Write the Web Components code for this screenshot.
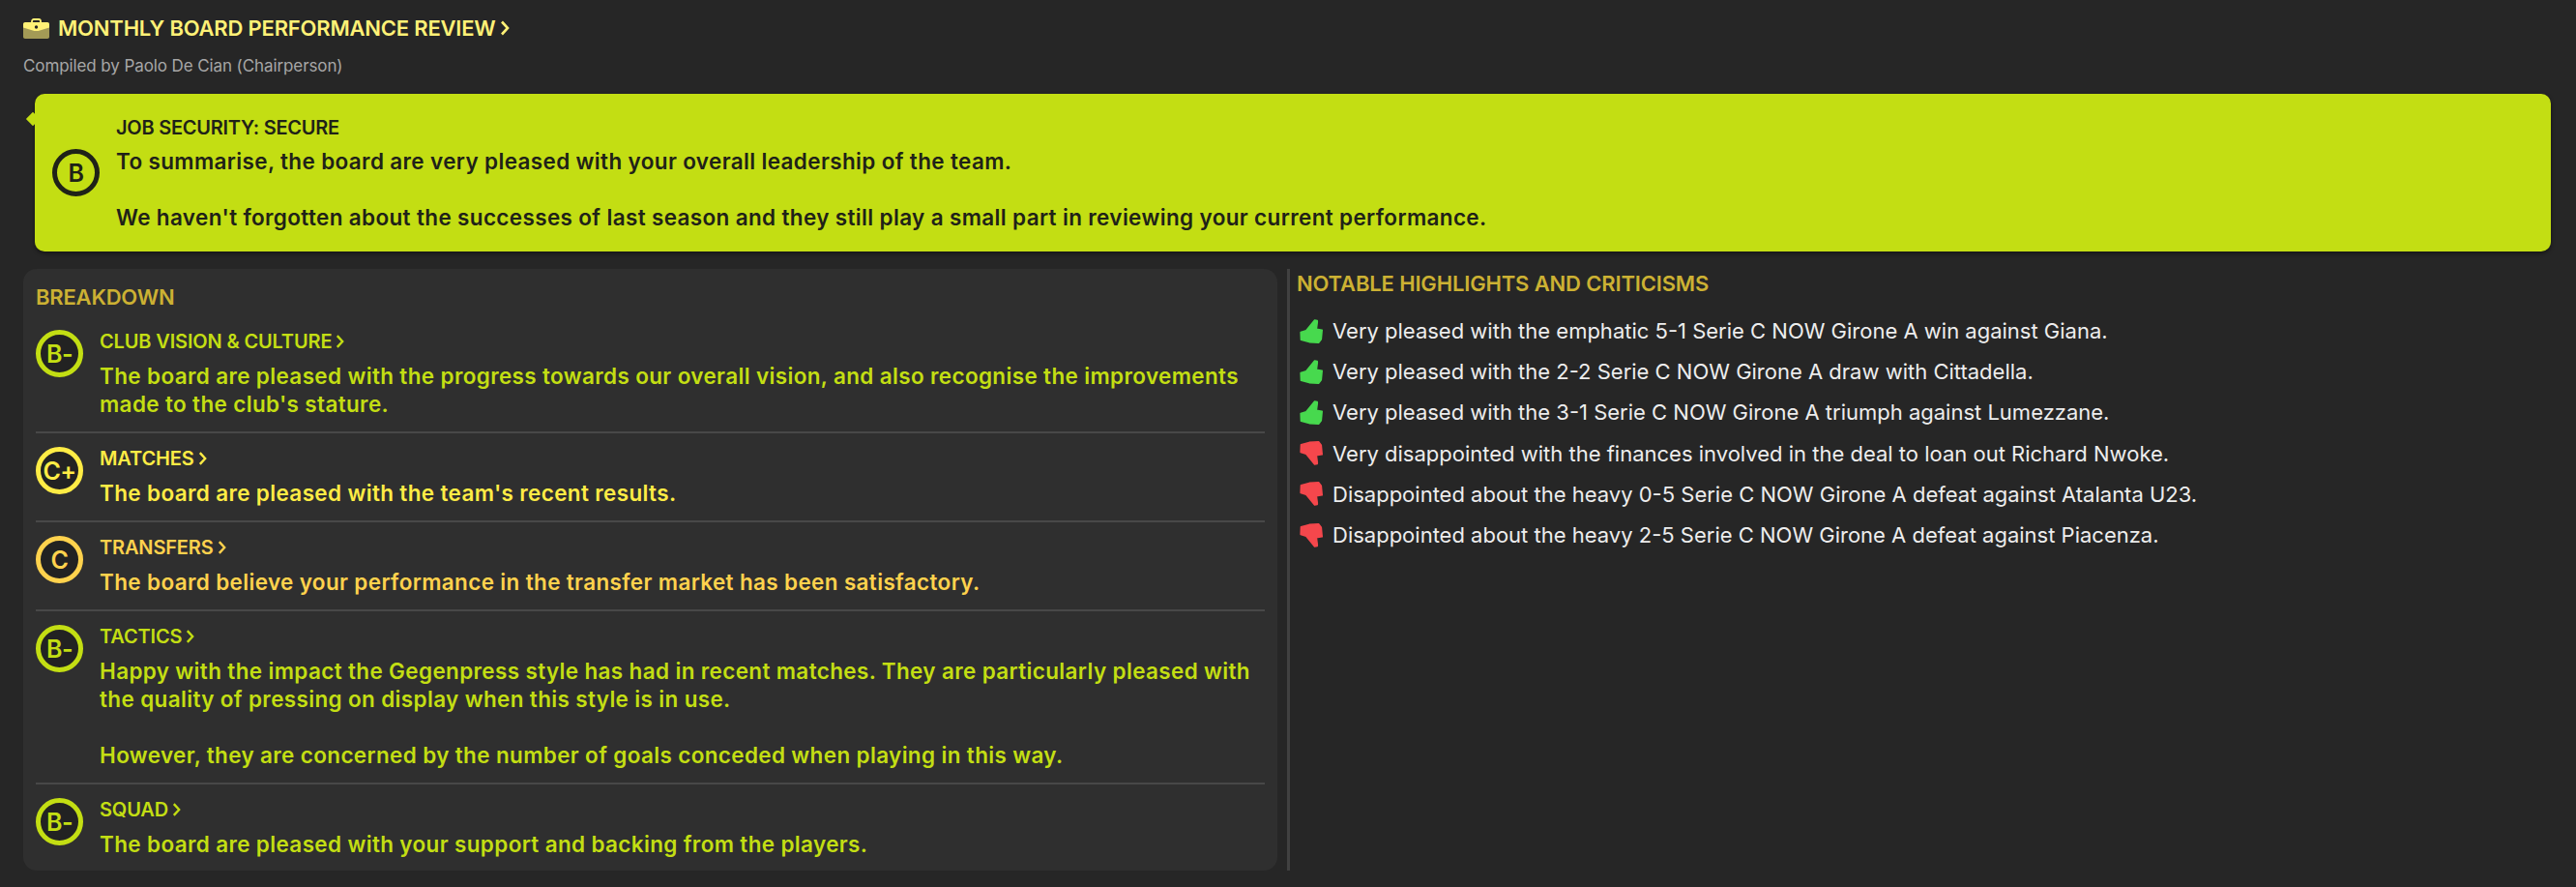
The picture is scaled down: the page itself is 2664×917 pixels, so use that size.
<!DOCTYPE html>
<html>
<head>
<meta charset="utf-8">
<style>
html, body { margin: 0; height: 100%; background: #262626; overflow: hidden; }
body { font-family: Inter, "Noto Sans", sans-serif; }
board-page { height: 917px; }
</style>
</head>
<body>
<board-page>
	<review-header slot="header" title-text="MONTHLY BOARD PERFORMANCE REVIEW" sub="Compiled by Paolo De Cian (Chairperson)"></review-header>
	<speech-bubble slot="bubble" grade="B" heading="JOB SECURITY: SECURE">
		<p>To summarise, the board are very pleased with your overall leadership of the team.</p>
		<p>We haven't forgotten about the successes of last season and they still play a small part in reviewing your current performance.</p>
	</speech-bubble>
	<breakdown-panel slot="left" heading="BREAKDOWN">
		<breakdown-row grade="B-" color="#c3de13" title-text="CLUB VISION &amp; CULTURE"><p>The board are pleased with the progress towards our overall vision, and also recognise the improvements<br>made to the club's stature.</p></breakdown-row>
		<breakdown-row grade="C+" color="#ffec45" title-text="MATCHES"><p>The board are pleased with the team's recent results.</p></breakdown-row>
		<breakdown-row grade="C" color="#ffd24d" title-text="TRANSFERS"><p>The board believe your performance in the transfer market has been satisfactory.</p></breakdown-row>
		<breakdown-row grade="B-" color="#c3de13" title-text="TACTICS"><p>Happy with the impact the Gegenpress style has had in recent matches. They are particularly pleased with<br>the quality of pressing on display when this style is in use.</p><p>However, they are concerned by the number of goals conceded when playing in this way.</p></breakdown-row>
		<breakdown-row grade="B-" color="#c3de13" title-text="SQUAD" last><p>The board are pleased with your support and backing from the players.</p></breakdown-row>
	</breakdown-panel>
	<highlight-list slot="right" heading="NOTABLE HIGHLIGHTS AND CRITICISMS">
		<highlight-item kind="up">Very pleased with the emphatic 5-1 Serie C NOW Girone A win against Giana.</highlight-item>
		<highlight-item kind="up">Very pleased with the 2-2 Serie C NOW Girone A draw with Cittadella.</highlight-item>
		<highlight-item kind="up">Very pleased with the 3-1 Serie C NOW Girone A triumph against Lumezzane.</highlight-item>
		<highlight-item kind="down">Very disappointed with the finances involved in the deal to loan out Richard Nwoke.</highlight-item>
		<highlight-item kind="down">Disappointed about the heavy 0-5 Serie C NOW Girone A defeat against Atalanta U23.</highlight-item>
		<highlight-item kind="down">Disappointed about the heavy 2-5 Serie C NOW Girone A defeat against Piacenza.</highlight-item>
	</highlight-list>
</board-page>
<script>
const chevron = `<svg class="chev" viewBox="0 0 10 16" width="10" height="16"><path d="M2 1.5 8 8l-6 6.5" fill="none" stroke="currentColor" stroke-width="2.6"/></svg>`;
// fist with the thumb up, flipped vertically for the red ones
const thumb = `<path d="M1.2 13.6 6.800 11.800 15.600 1 18.200 1.600 18.300 3 17.300 10.300 23.200 11.200 22.300 20.800 19.600 24.200 10 23.600 1.500 21.300Z" stroke-width="1.600" stroke-linejoin="round"/>`;

customElements.define('board-page', class extends HTMLElement {
	constructor() {
		super();
		this.attachShadow({ mode: 'open' }).innerHTML = `
		<style>
			:host { display: flex; flex-direction: column; box-sizing: border-box; padding: 0 26px 17px 24px; }
			.cols { flex: 1; display: flex; margin-top: 18px; min-height: 0; }
			.left { display: block; width: 1297px; flex: none; }
			.rule { width: 3px; background: #414141; margin-left: 10px; flex: none; }
		</style>
		<slot name="header"></slot>
		<slot name="bubble"></slot>
		<div class="cols">
			<div class="left"><slot name="left"></slot></div>
			<div class="rule"></div>
			<slot name="right"></slot>
		</div>`;
	}
});

customElements.define('review-header', class extends HTMLElement {
	connectedCallback() {
		this.attachShadow({ mode: 'open' }).innerHTML = `
		<style>
			:host { display: block; height: 97px; box-sizing: border-box; padding-top: 15px; }
			.t { display: flex; align-items: center; height: 28px; color: #fff176; font-size: 22px; font-weight: 600; letter-spacing: -0.2px; }
			.t svg.case { margin-right: 9px; }
			.chev { margin-left: 4px; }
			.s { margin-top: 11px; color: #a6a6a6; font-size: 17px; letter-spacing: -0.1px; line-height: 28px; }
		</style>
		<div class="t">
			<svg class="case" width="27" height="21" viewBox="0 0 27 21">
				<path d="M9 5V3C9 1.800 9.800 1 11 1h5c1.200 0 2 .8 2 2V5" fill="none" stroke="#fff176" stroke-width="1.800"/>
				<path d="M0 9h27v10c0 1.200-.8 2-2 2H2c-1.200 0-2-.8-2-2Z" fill="#a39a56"/>
				<path d="M2 4h23c1.200 0 2 .8 2 2V9.500L15.500 13h-4L0 9.500V6C0 4.800.8 4 2 4Z" fill="#fff176"/>
				<circle cx="13.500" cy="9" r="1.700" fill="#262626"/>
			</svg>
			<span>${this.getAttribute('title-text')}</span>${chevron}
		</div>
		<div class="s">${this.getAttribute('sub')}</div>`;
	}
});

customElements.define('grade-badge', class extends HTMLElement {
	connectedCallback() {
		this.attachShadow({ mode: 'open' }).innerHTML = `
		<style>
			:host { display: flex; flex: none; align-items: center; justify-content: center; box-sizing: border-box;
				width: 49px; height: 49px; border-radius: 50%; border: 5px solid currentColor;
				background: var(--badge-bg, #222); font-size: 25px; font-weight: 600; letter-spacing: -0.5px; }
		</style>
		${this.getAttribute('grade')}`;
	}
});

customElements.define('speech-bubble', class extends HTMLElement {
	connectedCallback() {
		this.attachShadow({ mode: 'open' }).innerHTML = `
		<style>
			:host { display: flex; align-items: center; position: relative; box-sizing: border-box; height: 163px; margin-left: 12px;
				padding: 0 18px; background: #c3de13; border-radius: 10px; color: #1f2218;
				box-shadow: 0 2px 4px rgba(0,0,0,.45); --badge-bg: transparent; }
			.tail { position: absolute; left: -9px; top: 19px; width: 14px; height: 14px; background: #c3de13; transform: rotate(45deg) scale(.72); }
			.txt { margin-left: 17px; }
			h2 { margin: 0 0 6px; font-size: 20px; line-height: 28px; font-weight: 600; letter-spacing: -0.25px; }
			::slotted(p) { margin: 0 0 29px; font-size: 22.5px; line-height: 29px; font-weight: 600; letter-spacing: 0.35px; }
			::slotted(p:last-child) { margin-bottom: 0; }
		</style>
		<div class="tail"></div>
		<grade-badge grade="${this.getAttribute('grade')}"></grade-badge>
		<div class="txt"><h2>${this.getAttribute('heading')}</h2><slot></slot></div>`;
	}
});

customElements.define('breakdown-panel', class extends HTMLElement {
	connectedCallback() {
		this.attachShadow({ mode: 'open' }).innerHTML = `
		<style>
			:host { display: block; box-sizing: border-box; height: 100%; padding: 14px 13px 0 13px; background: #2f2f2f; border-radius: 14px; }
			h3 { margin: 0 0 19px; color: #ccb133; font-size: 22px; line-height: 30px; font-weight: 600; letter-spacing: -0.2px; }
		</style>
		<h3>${this.getAttribute('heading')}</h3>
		<slot></slot>`;
	}
});

customElements.define('breakdown-row', class extends HTMLElement {
	connectedCallback() {
		const c = this.getAttribute('color');
		this.attachShadow({ mode: 'open' }).innerHTML = `
		<style>
			:host { display: flex; gap: 17px; box-sizing: border-box; color: ${c}; padding-bottom: 14px; margin-bottom: 14px; border-bottom: 2px solid #484848; }
			:host([last]) { border-bottom: 0; padding-bottom: 0; margin-bottom: 0; }
			.t { display: flex; align-items: center; height: 24px; font-size: 20px; font-weight: 600; letter-spacing: -0.15px; margin-bottom: 9px; }
			.chev { margin-left: 4px; width: 9px; }
			::slotted(p) { margin: 0 0 29px; font-size: 22.5px; line-height: 29px; font-weight: 600; letter-spacing: 0.35px; }
			::slotted(p:last-child) { margin-bottom: 0; }
			grade-badge { --badge-bg: #222; }
		</style>
		<grade-badge grade="${this.getAttribute('grade')}"></grade-badge>
		<div><div class="t">${this.getAttribute('title-text').replace('&','&amp;')}${chevron}</div><slot></slot></div>`;
	}
});

customElements.define('highlight-list', class extends HTMLElement {
	connectedCallback() {
		this.attachShadow({ mode: 'open' }).innerHTML = `
		<style>
			:host { display: block; flex: 1; padding-left: 7px; }
			h3 { margin: 0 0 13px; color: #ccb133; font-size: 22px; line-height: 30px; font-weight: 600; letter-spacing: -0.15px; }
		</style>
		<h3>${this.getAttribute('heading')}</h3>
		<slot></slot>`;
	}
});

customElements.define('highlight-item', class extends HTMLElement {
	connectedCallback() {
		const up = this.getAttribute('kind') == 'up';
		const col = up ? '#47d94e' : '#f5474c';
		this.attachShadow({ mode: 'open' }).innerHTML = `
		<style>
			:host { display: flex; align-items: center; height: 42.2px; color: #ededed; font-size: 22px; }
			svg { flex: none; margin: 0 10px 0 3px; }
		</style>
		<svg width="24" height="25" viewBox="0 0 24 25" fill="${col}" stroke="${col}">
			${up ? thumb : `<g transform="translate(0 25) scale(1 -1)">${thumb}</g>`}
		</svg>
		<slot></slot>`;
	}
});
</script>
</body>
</html>
